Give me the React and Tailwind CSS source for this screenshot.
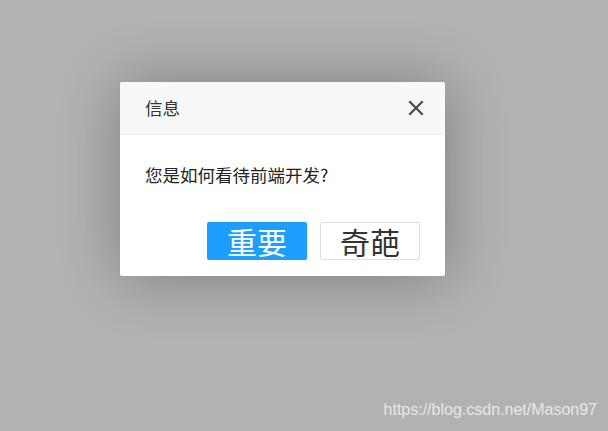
const CloseIcon = () => (
  <svg width="16" height="16" viewBox="0 0 16 16" fill="none">
    <path d="M2 2L14 14M14 2L2 14" stroke="#4a4a4a" strokeWidth="2.2" strokeLinecap="square" />
  </svg>
);

const App = () => {
  return (
    <div
      className="relative h-[431px] w-[608px] overflow-hidden bg-[#b2b2b2] pt-[82px] pl-[120px]"
      style={{ fontFamily: '"Noto Sans CJK SC", "Liberation Sans", sans-serif' }}
    >
      <div className="w-[325px] rounded-[2px] bg-white shadow-[1px_1px_60px_rgba(0,0,0,0.3)]">
        <div className="flex h-[53px] items-center justify-between rounded-t-[2px] border-b border-[#eeeeee] bg-[#f8f8f8] pl-[25px] pr-[21px]">
          <span className="text-[17.5px] text-[#333333]">信息</span>
          <CloseIcon />
        </div>
        <div className="px-[25px] pt-[25px] pb-[25px] text-[17.5px] leading-[30px] text-[#222222]">
          您是如何看待前端开发?
        </div>
        <div className="flex justify-end gap-[13px] pt-[7px] pr-[25px] pb-[16px]">
          <button className="flex h-[38px] w-[100px] items-center justify-center rounded-[2px] bg-[#1e9fff] text-[30px] leading-none text-white">
            重要
          </button>
          <button className="flex h-[38px] w-[100px] items-center justify-center rounded-[2px] border border-[#dedede] bg-white text-[30px] leading-none text-[#333333]">
            奇葩
          </button>
        </div>
      </div>
      <span
        className="absolute right-[11px] bottom-[9px] text-[16px] text-[#e8e8e8]"
        style={{ fontFamily: '"Liberation Sans", Arial, sans-serif' }}
      >
        https://blog.csdn.net/Mason97
      </span>
    </div>
  );
};

export default App;
